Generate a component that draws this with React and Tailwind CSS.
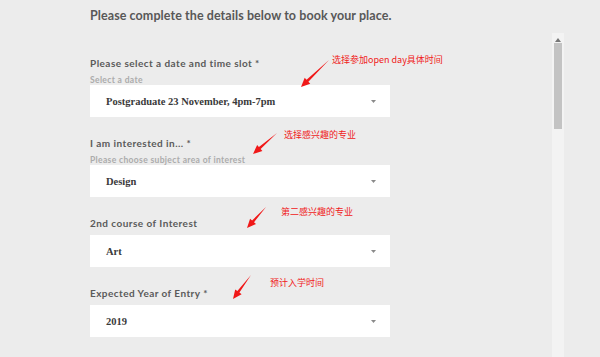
import React from "react";

const Caret = () => (
  <svg width="5" height="3" viewBox="0 0 5 3" className="shrink-0">
    <polygon points="0,0 5,0 2.5,3" fill="#8a8a8a" />
  </svg>
);

function Select({ value }) {
  return (
    <div className="h-[32px] w-[300px] bg-white flex items-center justify-between pl-[16px] pr-[14px]">
      <span className="pt-[2px] text-[10.5px] font-bold text-[#3a3a3a]" style={{ fontFamily: '"Liberation Serif", serif' }}>
        {value}
      </span>
      <Caret />
    </div>
  );
}

function Field({ label, sub, value, className = "" }) {
  return (
    <div className={"flex flex-col " + className}>
      <div className="h-[24px] flex items-center text-[10px] font-bold tracking-[0.45px] text-[#5a5a5a]">{label}</div>
      {sub && (
        <div className="h-[10px] flex items-center text-[8.5px] font-bold tracking-[0.35px] text-[#ababab]">{sub}</div>
      )}
      <Select value={value} />
    </div>
  );
}

function Arrow({ x1, y1, x2, y2 }) {
  const dx = x2 - x1;
  const dy = y2 - y1;
  const len = Math.hypot(dx, dy);
  const ux = dx / len;
  const uy = dy / len;
  const px = -uy;
  const py = ux;
  const headLen = 9;
  const headW = 4;
  const bx = x2 - ux * headLen;
  const by = y2 - uy * headLen;
  const pts = [
    [x1, y1],
    [bx + px * 1.3, by + py * 1.3],
    [bx + px * headW, by + py * headW],
    [x2, y2],
    [bx - px * headW, by - py * headW],
    [bx - px * 1.3, by - py * 1.3],
  ]
    .map((p) => p.join(","))
    .join(" ");
  return <polygon points={pts} fill="#f01818" />;
}

function Note({ x, y, children }) {
  return (
    <div
      className="absolute text-[9px] leading-[10px] text-[#f02020] whitespace-nowrap"
      style={{ left: x, top: y, fontFamily: '"Noto Sans CJK SC", "Noto Sans", sans-serif' }}
    >
      {children}
    </div>
  );
}

export default function App() {
  return (
    <div
      className="relative w-[600px] h-[357px] overflow-hidden bg-[#ececec]"
      style={{ fontFamily: 'Lato, "Open Sans", sans-serif' }}
    >
      <div className="flex flex-col pl-[90px]">
        <div className="mt-[4px] h-[24px] flex items-center text-[12.5px] font-bold tracking-[0.08px] text-[#585858]">
          Please complete the details below to book your place.
        </div>
        <Field className="mt-[23px]" label="Please select a date and time slot *" sub="Select a date" value="Postgraduate 23 November, 4pm-7pm" />
        <Field className="mt-[14px]" label="I am interested in... *" sub="Please choose subject area of interest" value="Design" />
        <Field className="mt-[14px]" label="2nd course of Interest" value="Art" />
        <Field className="mt-[14px]" label="Expected Year of Entry *" value="2019" />
      </div>

      {/* annotations */}
      <svg className="absolute left-0 top-0" width="600" height="357">
        <Arrow x1={329} y1={60} x2={301} y2={87} />
        <Arrow x1={277} y1={133} x2={253} y2={154} />
        <Arrow x1={266} y1={207} x2={247} y2={228} />
        <Arrow x1={251} y1={275} x2={233} y2={299} />
      </svg>
      <Note x={332} y={55}>选择参加open day具体时间</Note>
      <Note x={284} y={130}>选择感兴趣的专业</Note>
      <Note x={281} y={207}>第二感兴趣的专业</Note>
      <Note x={270} y={278}>预计入学时间</Note>

      {/* scrollbar */}
      <div className="absolute left-[552px] top-[33px] bottom-0 w-[12px] bg-[#f3f3f3] flex flex-col items-center">
        <svg width="6" height="4" viewBox="0 0 6 4" className="mt-[5px]">
          <polygon points="3,0 6,4 0,4" fill="#777" />
        </svg>
        <div className="mt-[1px] w-[8px] h-[86px] bg-[#c3c3c3]" />
      </div>
    </div>
  );
}
